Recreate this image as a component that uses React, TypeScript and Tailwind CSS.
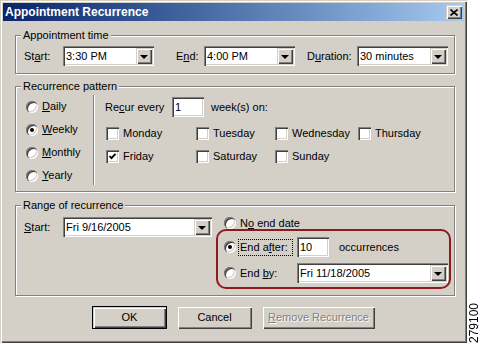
import React from 'react';

const sunken =
  'shadow-[inset_1px_1px_0_#808080,inset_2px_2px_0_#404040,inset_-1px_-1px_0_#fff,inset_-2px_-2px_0_#d4d0c8]';
const raised =
  'shadow-[inset_1px_1px_0_#d4d0c8,inset_2px_2px_0_#fff,inset_-1px_-1px_0_#404040,inset_-2px_-2px_0_#808080]';

// label with one underlined access key
const Key: React.FC<{ pre?: string; k: string; post?: string }> = ({ pre = '', k, post = '' }) => (
  <span className="whitespace-nowrap">
    {pre}
    <span className="underline underline-offset-[1px]">{k}</span>
    {post}
  </span>
);

const Combo: React.FC<{ value: string; w: string }> = ({ value, w }) => (
  <div className={`${w} h-[20px] bg-white flex p-[2px] ${sunken}`}>
    <span className="flex-1 pl-[1px] leading-[16px] whitespace-nowrap overflow-hidden">{value}</span>
    <div className={`w-[16px] h-[16px] bg-[#d4d0c8] flex items-center justify-center ${raised}`}>
      <div className="w-0 h-0 border-x-[4px] border-x-transparent border-t-[4px] border-t-black mt-[1px]" />
    </div>
  </div>
);

const TextBox: React.FC<{ value: string }> = ({ value }) => (
  <div className={`w-[32px] h-[20px] bg-white pl-[3px] leading-[20px] ${sunken}`}>{value}</div>
);

const Radio: React.FC<{ on?: boolean }> = ({ on }) => (
  <div
    className={`w-[12px] h-[12px] rounded-full bg-white flex items-center justify-center shrink-0 shadow-[inset_1px_1px_0_#808080,inset_2px_2px_0_#404040,inset_-1px_-1px_0_#fff,inset_-2px_-2px_0_#d4d0c8]`}
  >
    {on && <div className="w-[4px] h-[4px] rounded-full bg-black" />}
  </div>
);

const Check: React.FC<{ on?: boolean }> = ({ on }) => (
  <div className={`w-[13px] h-[13px] bg-white shrink-0 flex items-center justify-center ${sunken}`}>
    {on && (
      <svg width="9" height="9" viewBox="0 0 9 9">
        <polyline points="1.5,4 3.5,6.2 7.5,1.8" fill="none" stroke="#000" strokeWidth="1.8" />
      </svg>
    )}
  </div>
);

const Group: React.FC<{ title: string; className: string; children: React.ReactNode }> = ({ title, className, children }) => (
  <fieldset
    className={`ml-[12px] w-[440px] border border-[#808080] shadow-[inset_1px_1px_0_#fff,1px_1px_0_#fff] ${className}`}
  >
    <legend className="ml-[5px] px-[2px] leading-[13px] bg-[#d4d0c8]">{title}</legend>
    {children}
  </fieldset>
);

const Btn: React.FC<{ w: string; def?: boolean; disabled?: boolean; children: React.ReactNode }> = ({ w, def, disabled, children }) => (
  <div className={`${w} h-[23px] ${def ? 'border border-black' : ''}`}>
    <div
      className={`w-full h-full flex items-center justify-center ${raised} ${
        disabled ? 'text-[#808080] [text-shadow:1px_1px_0_#fff]' : ''
      }`}
    >
      {children}
    </div>
  </div>
);

const days = [
  ['Monday', false],
  ['Tuesday', false],
  ['Wednesday', false],
  ['Thursday', false],
  ['Friday', true],
  ['Saturday', false],
  ['Sunday', false],
] as const;
const colW = ['w-[90px]', 'w-[79px]', 'w-[83px]', 'w-[80px]'];

export default function App() {
  return (
    <div className="w-[481px] h-[344px] bg-white flex font-['Liberation_Sans',Arial,sans-serif] text-[11px] text-black">
      <div
        className={`w-[467px] h-[343px] bg-[#d4d0c8] p-[3px] shadow-[inset_1px_1px_0_#d4d0c8,inset_2px_2px_0_#fff,inset_-1px_-1px_0_#404040,inset_-2px_-2px_0_#808080]`}
      >
        {/* title bar */}
        <div className="h-[18px] flex items-center justify-between bg-linear-to-r from-[#0a246a] to-[#a6caf0] pl-[2px] pr-[2px]">
          <span className="text-white font-bold text-[12px] leading-[18px]">Appointment Recurrence</span>
          <div className={`w-[16px] h-[14px] bg-[#d4d0c8] flex items-center justify-center ${raised}`}>
            <svg width="8" height="7" viewBox="0 0 8 7">
              <path d="M0.5 0.5 L7.5 6.5 M7.5 0.5 L0.5 6.5" stroke="#000" strokeWidth="1.6" />
            </svg>
          </div>
        </div>

        <Group title="Appointment time" className="mt-[8px] h-[45px]">
          <div className="flex items-center pl-[8px] mt-[4px]">
            <span className="w-[39px]"><Key pre="St" k="a" post="rt:" /></span>
            <Combo value="3:30 PM" w="w-[91px]" />
            <span className="w-[28px] ml-[22px]"><Key pre="E" k="n" post="d:" /></span>
            <Combo value="4:00 PM" w="w-[91px]" />
            <span className="w-[50px] ml-[12px]"><Key pre="D" k="u" post="ration:" /></span>
            <Combo value="30 minutes" w="w-[91px]" />
          </div>
        </Group>

        <Group title="Recurrence pattern" className="mt-[6px] h-[112px]">
          <div className="flex">
            <div className="w-[77px] pl-[10px] mt-[2px] flex flex-col">
              {[
                ['D', 'aily', false],
                ['W', 'eekly', true],
                ['M', 'onthly', false],
                ['Y', 'early', false],
              ].map(([k, post, on]) => (
                <div key={k as string} className="h-[23px] flex items-center gap-[4px]">
                  <Radio on={on as boolean} />
                  <Key k={k as string} post={post as string} />
                </div>
              ))}
            </div>
            <div className="w-[2px] h-[90px] mt-[2px] border-l border-l-[#808080] border-r border-r-white" />
            <div className="pl-[10px]">
              <div className="flex items-center h-[20px] mt-[4px]">
                <span className="w-[67px]"><Key pre="Re" k="c" post="ur every" /></span>
                <TextBox value="1" />
                <span className="ml-[7px]">week(s) on:</span>
              </div>
              <div className="mt-[5px] ml-[1px] grid grid-cols-[90px_79px_83px_80px]">
                {days.map(([d, on], i) => (
                  <div key={d} className={`${colW[i % 4]} h-[23px] flex items-center gap-[4px]`}>
                    <Check on={on} />
                    <span>{d}</span>
                  </div>
                ))}
              </div>
            </div>
          </div>
        </Group>

        <Group title="Range of recurrence" className="mt-[7px] h-[97px]">
          <div className="flex">
            <div className="flex items-center pl-[8px] mt-[5px] h-[20px]">
              <span className="w-[39px]"><Key k="S" post="tart:" /></span>
              <Combo value="Fri 9/16/2005" w="w-[149px]" />
            </div>
            <div className="relative ml-[12px] flex flex-col">
              <div className="h-[22px] flex items-center gap-[4px]">
                <Radio />
                <Key pre="N" k="o" post=" end date" />
              </div>
              <div className="h-[20px] mt-[3px] flex items-center">
                <Radio on />
                <span className="ml-[2px] w-[55px] h-[17px] px-[1px] leading-[15px] border border-dotted border-black">
                  <Key pre="End a" k="f" post="ter:" />
                </span>
                <div className="ml-[4px]"><TextBox value="10" /></div>
                <span className="ml-[10px]">occurrences</span>
              </div>
              <div className="h-[20px] mt-[6px] flex items-center">
                <Radio />
                <span className="w-[61px] pl-[4px]"><Key pre="End " k="b" post="y:" /></span>
                <Combo value="Fri 11/18/2005" w="w-[151px]" />
              </div>
              <div className="absolute left-[-8px] top-[17px] w-[235px] h-[60px] border-2 border-[#8c1c1c] rounded-[10px] pointer-events-none" />
            </div>
          </div>
        </Group>

        <div className="mt-[10px] flex justify-center gap-[10px]">
          <Btn w="w-[75px]" def>OK</Btn>
          <Btn w="w-[75px]">Cancel</Btn>
          <Btn w="w-[113px]" disabled>
            <Key k="R" post="emove Recurrence" />
          </Btn>
        </div>
      </div>
      <div className="flex-1 flex items-end justify-center pb-[1px]">
        <span className="[writing-mode:vertical-rl] rotate-180 text-[12px] leading-[12px]">279100</span>
      </div>
    </div>
  );
}
